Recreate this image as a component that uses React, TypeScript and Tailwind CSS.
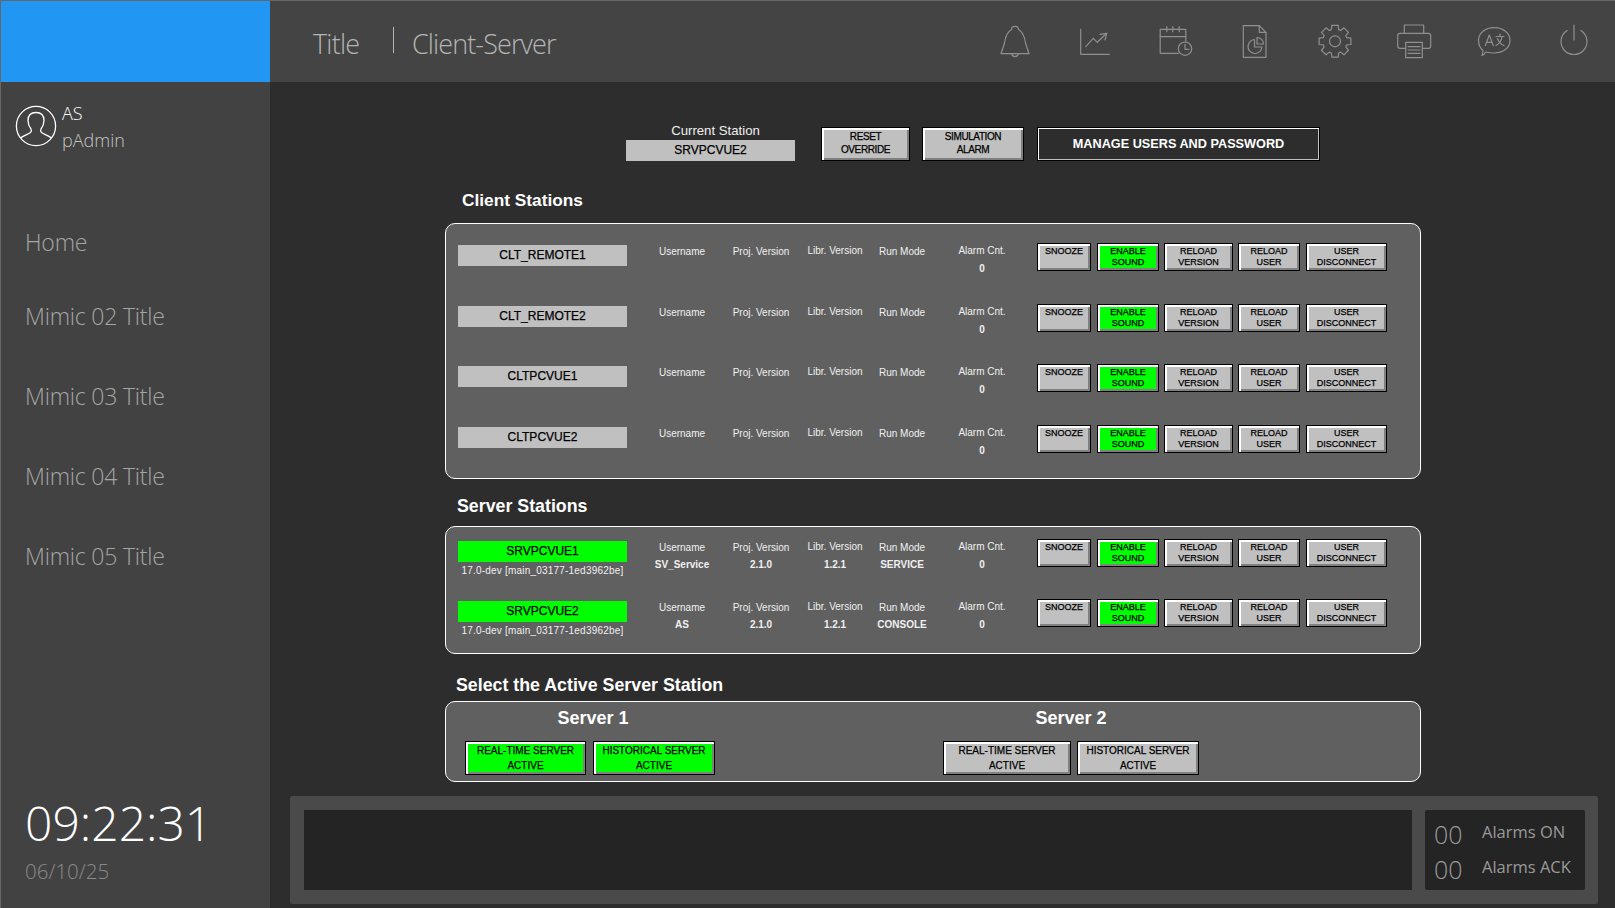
import React from "react";

const ink = "#8f8f8f";

function Ico({ children }: { children: React.ReactNode }) {
  return (
    <svg width="40" height="40" viewBox="0 0 40 40" fill="none" stroke={ink} strokeWidth="1.2" strokeLinejoin="round" strokeLinecap="round">
      {children}
    </svg>
  );
}

function gearPath() {
  const cx = 20, cy = 20.3, n = 8, ro = 16.2, ri = 12.2;
  const pts: string[] = [];
  for (let i = 0; i < n; i++) {
    const a = (i * 2 * Math.PI) / n - Math.PI / 2;
    const w = 0.2, g = 0.3;
    const p = (r: number, t: number) => `${(cx + r * Math.cos(t)).toFixed(2)} ${(cy + r * Math.sin(t)).toFixed(2)}`;
    pts.push(p(ri, a - g), p(ro, a - w), p(ro, a + w), p(ri, a + g));
  }
  return "M" + pts.join(" L") + " Z";
}

const Icons = [
  <Ico key="bell">
    <path d="M6 32.7H34L30.5 22C29.5 14 26 10 23.3 8.3C23.5 6 22.5 5.3 20 5.3C17.5 5.3 16.5 6 16.7 8.3C14 10 10.5 14 9.5 22Z" />
    <path d="M16.7 33a3.4 3.4 0 0 0 6.6 0" />
  </Ico>,
  <Ico key="chart">
    <path d="M5.7 8.3V33.3H34.3" />
    <path d="M10.7 25.7L18.3 17.3L22.3 21.3L31.7 12.3" />
    <path d="M25 13.3L31.7 12.3L30 19" />
  </Ico>,
  <Ico key="cal">
    <path d="M30.8 21V8.3H5.2V32.3H23.3" />
    <path d="M5.2 15.7H30.8M11.8 5.7V10.7M17.8 5.7V10.7M24.2 5.7V10.7" />
    <circle cx="30" cy="27.7" r="6.7" />
    <path d="M30 23.3V28.3H34" />
  </Ico>,
  <Ico key="file">
    <path d="M24.3 4.7H8.3V36.3H31V11.4Z" />
    <path d="M24.3 4.7V11.4H31" />
    <path d="M19.5 18.5a7 7 0 1 0 7.5 7.5H19.5Z" />
    <path d="M22 16.5a6.5 6.5 0 0 1 6.5 6.5H22Z" />
  </Ico>,
  <Ico key="gear">
    <path d={gearPath()} />
    <circle cx="20" cy="20.3" r="5.5" />
  </Ico>,
  <Ico key="print">
    <path d="M10.3 12.3V4H29.7V12.3" />
    <path d="M11.7 27.3H6C4.7 27.3 3.7 26.3 3.7 25V14.6C3.7 13.3 4.7 12.3 6 12.3H34.4C35.7 12.3 36.7 13.3 36.7 14.6V25C36.7 26.3 35.7 27.3 34.4 27.3H28.3" />
    <path d="M11.7 21.3H28.3V36.7H11.7Z" />
    <path d="M14 25.7H26M14 29H26M14 32.3H26" />
  </Ico>,
  <Ico key="lang">
    <path d="M9 29.5C5.5 26.5 4.5 23 4.5 19.5C4.5 12 11.5 6.7 20 6.7C29 6.7 36 12 36 19.5C36 27 29 32 20 32C17 32 14 31.5 12 31C11 32.5 9.5 34 8 34.5C8.5 33 9 31 9 29.5Z" />
    <path d="M11.3 24.7L15.3 14L19.3 24.7M12.7 21.3H18" />
    <path d="M22 15.5H30M26 13V15.5M28 15.5C27.5 19.5 25 23 22 24.5M23.5 17.5C24.5 20.5 27 23.5 30 24.5" />
  </Ico>,
  <Ico key="power">
    <path d="M20 4V19" />
    <path d="M13.1 9.5A13 13 0 1 0 26.9 9.5" />
  </Ico>,
];

const bevel = "border border-black shadow-[inset_2px_2px_0_#ffffff,inset_-2px_-2px_0_#808080]";
const thick = "[-webkit-text-stroke:0.25px_currentColor]";

function Btn({ w, green, children, h = "h-[28px]", pad = "pt-[2px] leading-[11px] text-[9px]" }: { w: string; green?: boolean; h?: string; pad?: string; children: React.ReactNode }) {
  return (
    <div className={`${w} ${h} ${bevel} ${pad} ${green ? "bg-[#00ff00]" : "bg-[#c0c0c0]"} text-black text-center shrink-0 ${thick}`}>
      {children}
    </div>
  );
}

function Col({ w, label, value, cls = "" }: { w: string; label: string; value?: string; cls?: string }) {
  return (
    <div className={`${w} shrink-0 text-center text-[#f0f0f0] text-[10px] leading-[13px] ${cls}`}>
      <div>{label}</div>
      <div className="mt-[4px] h-[13px] font-bold">{value}</div>
    </div>
  );
}

type Row = { name: string; green?: boolean; version?: string; user?: string; proj?: string; libr?: string; mode?: string; alarm: string; h: string };

function Station({ r }: { r: Row }) {
  return (
    <div className={`flex items-start ${r.h}`}>
      <div className="w-[169px] shrink-0 mt-[2px]">
        <div className={`h-[21px] ${r.green ? "bg-[#00ff00]" : "bg-[#c0c0c0]"} text-black text-[12px] leading-[21px] text-center ${thick}`}>{r.name}</div>
        {r.version && <div className="text-[#f0f0f0] text-[10px] leading-[13px] text-center mt-[2px] tracking-[0.2px]">{r.version}</div>}
      </div>
      <div className="flex ml-[20px] mt-[2px]">
        <Col w="w-[70px]" label="Username" value={r.user} />
        <Col w="w-[76px] ml-[6px]" label="Proj. Version" value={r.proj} />
        <Col w="w-[72px]" label="Libr. Version" value={r.libr} cls="-mt-px [&>div:last-child]:mt-[5px]" />
        <Col w="w-[62px]" label="Run Mode" value={r.mode} />
        <Col w="w-[70px] ml-[14px]" label="Alarm Cnt." value={r.alarm} cls="-mt-px [&>div:last-child]:mt-[5px]" />
      </div>
      <div className="flex ml-[20px]">
        <Btn w="w-[54px]">SNOOZE</Btn>
        <Btn w="w-[62px] ml-[6px]" green>ENABLE<br />SOUND</Btn>
        <Btn w="w-[69px] ml-[5px]">RELOAD<br />VERSION</Btn>
        <Btn w="w-[62px] ml-[5px]">RELOAD<br />USER</Btn>
        <Btn w="w-[81px] ml-[6px]">USER<br />DISCONNECT</Btn>
      </div>
    </div>
  );
}

function Panel({ h, cls, children }: { h: string; cls: string; children: React.ReactNode }) {
  return (
    <div className={`ml-[175px] w-[976px] ${h} ${cls} border border-white rounded-[10px] bg-[#606060]`}>
      {children}
    </div>
  );
}

function Heading({ cls, children }: { cls: string; children: React.ReactNode }) {
  return <div className={`${cls} h-[20px] text-white font-bold leading-[20px]`}>{children}</div>;
}

function Active({ w, cls = "", green, title }: { w: string; cls?: string; green?: boolean; title: string }) {
  return (
    <div className={`${w} ${cls} h-[34px] ${bevel} ${green ? "bg-[#00ff00]" : "bg-[#c0c0c0]"} text-black text-[10px] leading-[15px] pt-[1px] text-center shrink-0 ${thick}`}>
      {title}
      <br />
      ACTIVE
    </div>
  );
}

export default function App() {
  const v = "17.0-dev [main_03177-1ed3962be]";
  const clients: Row[] = [
    { name: "CLT_REMOTE1", alarm: "0", h: "h-[61px]" },
    { name: "CLT_REMOTE2", alarm: "0", h: "h-[60px]" },
    { name: "CLTPCVUE1", alarm: "0", h: "h-[61px]" },
    { name: "CLTPCVUE2", alarm: "0", h: "h-[50px]" },
  ];
  const servers: Row[] = [
    { name: "SRVPCVUE1", green: true, version: v, user: "SV_Service", proj: "2.1.0", libr: "1.2.1", mode: "SERVICE", alarm: "0", h: "h-[60px]" },
    { name: "SRVPCVUE2", green: true, version: v, user: "AS", proj: "2.1.0", libr: "1.2.1", mode: "CONSOLE", alarm: "0", h: "h-[50px]" },
  ];
  return (
    <div className="w-[1615px] h-[908px] overflow-hidden flex bg-[#2d2d2d] font-['Liberation_Sans',Arial,sans-serif]">
      <aside className="w-[270px] h-full shrink-0 flex flex-col bg-[#424242] border-l border-l-[#666666] font-['Open_Sans',sans-serif]">
        <div className="h-[82px] bg-[#2196f3] border-t border-t-[#666666]" />
        <div className="flex items-start mt-[23px] ml-[14px]">
          <svg width="42" height="42" viewBox="0 0 42 42" fill="none" stroke="#ffffff" strokeWidth="1.3" strokeLinejoin="round" className="shrink-0">
            <circle cx="21" cy="21" r="19.6" />
            <path d="M5.5 33C8 30.5 13 29.5 15.5 27.5C16.5 26.5 16.5 25 16 24C14 21.5 13 18.5 13 15.5C13 10.5 16 7.5 21 7.5C26 7.5 29 10.5 29 15.5C29 18.5 28 21.5 26 24C25.5 25 25.5 26.5 26.5 27.5C29 29.5 34 30.5 36.5 33" />
          </svg>
          <div className="ml-[5px] -mt-[5px] font-light">
            <div className="text-white text-[18px] leading-[27px]">AS</div>
            <div className="text-[#c4c4c4] text-[18px] leading-[27px]">pAdmin</div>
          </div>
        </div>
        <nav className="ml-[24px] mt-[73px] text-[#a6a6a6] text-[23px] font-light leading-[30px] flex flex-col tracking-[-0.2px]">
          <div>Home</div>
          <div className="mt-[44px]">Mimic 02 Title</div>
          <div className="mt-[50px]">Mimic 03 Title</div>
          <div className="mt-[50px]">Mimic 04 Title</div>
          <div className="mt-[50px]">Mimic 05 Title</div>
        </nav>
        <div className="mt-auto ml-[24px] mb-[22px] font-light">
          <div className="text-white text-[48px] leading-[60px]">09:22:31</div>
          <div className="text-[#8a8a8a] text-[20.5px] leading-[30px] mt-[3px]">06/10/25</div>
        </div>
      </aside>

      <div className="flex-1 min-w-0 flex flex-col">
        <header className="h-[82px] shrink-0 bg-[#444444] border-t border-t-[#666666] flex items-center font-['Open_Sans',sans-serif] font-light text-[#b4b4b4] text-[27px]">
          <div className="ml-[43px] w-[80px] tracking-[-0.8px] mt-[5px]">Title</div>
          <div className="w-px h-[26px] bg-[#b4b4b4] -mt-[3px]" />
          <div className="ml-[18px] tracking-[-0.9px] mt-[5px]">Client-Server</div>
          <div className="ml-auto mr-[21px] flex gap-[39.8px] -mt-px">{Icons}</div>
        </header>

        <main className="flex-1 flex flex-col">
          <div className="flex ml-[356px] mt-[45px] items-start">
            <div className="w-[169px]">
              <div className="h-[13px] -mt-[3px] mb-[3px] pl-[10px] text-center text-[#f0f0f0] text-[13.2px] leading-[13px]">Current Station</div>
              <div className={`h-[21px] bg-[#c0c0c0] text-black text-[12px] leading-[21px] text-center ${thick}`}>SRVPCVUE2</div>
            </div>
            <Btn w="w-[89px] ml-[26px]" h="h-[34px]" pad="pt-[2px] text-[10px] leading-[13px] tracking-[-0.4px]">
              RESET<br />OVERRIDE
            </Btn>
            <Btn w="w-[102px] ml-[12px]" h="h-[34px]" pad="pt-[2px] text-[10px] leading-[13px] tracking-[-0.4px]">
              SIMULATION<br />ALARM
            </Btn>
            <div className="w-[283px] ml-[13px] h-[34px] border border-black shadow-[inset_1px_1px_0_#ffffff,inset_-1px_-1px_0_#c0c0c0] bg-[#2d2d2d] text-white font-bold text-[12.7px] leading-[32px] text-center">
              MANAGE USERS AND PASSWORD
            </div>
          </div>

          <Heading cls="ml-[192px] mt-[29px] text-[17.3px]">Client Stations</Heading>
          <Panel h="h-[256px]" cls="mt-[13px] pt-[19px] pl-[12px]">
            {clients.map((r) => (
              <Station key={r.name} r={r} />
            ))}
          </Panel>

          <Heading cls="ml-[187px] mt-[17px] text-[17.8px]">Server Stations</Heading>
          <Panel h="h-[128px]" cls="mt-[10px] pt-[12px] pl-[12px]">
            {servers.map((r) => (
              <Station key={r.name} r={r} />
            ))}
          </Panel>

          <Heading cls="ml-[186px] mt-[21px] text-[17.8px]">Select the Active Server Station</Heading>
          <Panel h="h-[81px]" cls="mt-[6px] pl-[19px] flex">
            <div className="w-[250px] shrink-0">
              <div className="mt-[6px] h-[20px] text-center text-white font-bold text-[18px] leading-[20px] ml-[6px]">Server 1</div>
              <div className="flex mt-[13px]">
                <Active w="w-[121px]" green title="REAL-TIME SERVER" />
                <Active w="w-[122px] ml-[7px]" green title="HISTORICAL SERVER" />
              </div>
            </div>
            <div className="ml-[228px] w-[256px] shrink-0">
              <div className="mt-[6px] h-[20px] text-center text-white font-bold text-[18px] leading-[20px]">Server 2</div>
              <div className="flex mt-[13px]">
                <Active w="w-[128px]" title="REAL-TIME SERVER" />
                <Active w="w-[122px] ml-[6px]" title="HISTORICAL SERVER" />
              </div>
            </div>
          </Panel>

          <div className="ml-[20px] mt-[14px] w-[1308px] h-[108px] pl-[14px] pr-[13px] py-[14px] bg-[#4a4a4a] rounded-[2px] flex gap-[13px] font-['Open_Sans',sans-serif]">
            <div className="w-[1108px] h-[80px] bg-[#242424]" />
            <div className="w-[160px] h-[80px] bg-[#242424] rounded-[2px] pl-[9px] pt-[8px] text-[#9a9a9a] flex flex-col">
              <div className="flex items-start h-[35px]">
                <span className="w-[48px] text-[25px] leading-[32px] font-light">00</span>
                <span className="mt-[1px] text-[16.5px] leading-[26px]">Alarms ON</span>
              </div>
              <div className="flex items-start h-[35px]">
                <span className="w-[48px] text-[25px] leading-[32px] font-light">00</span>
                <span className="mt-[1px] text-[16.5px] leading-[26px]">Alarms ACK</span>
              </div>
            </div>
          </div>
        </main>
      </div>
    </div>
  );
}
